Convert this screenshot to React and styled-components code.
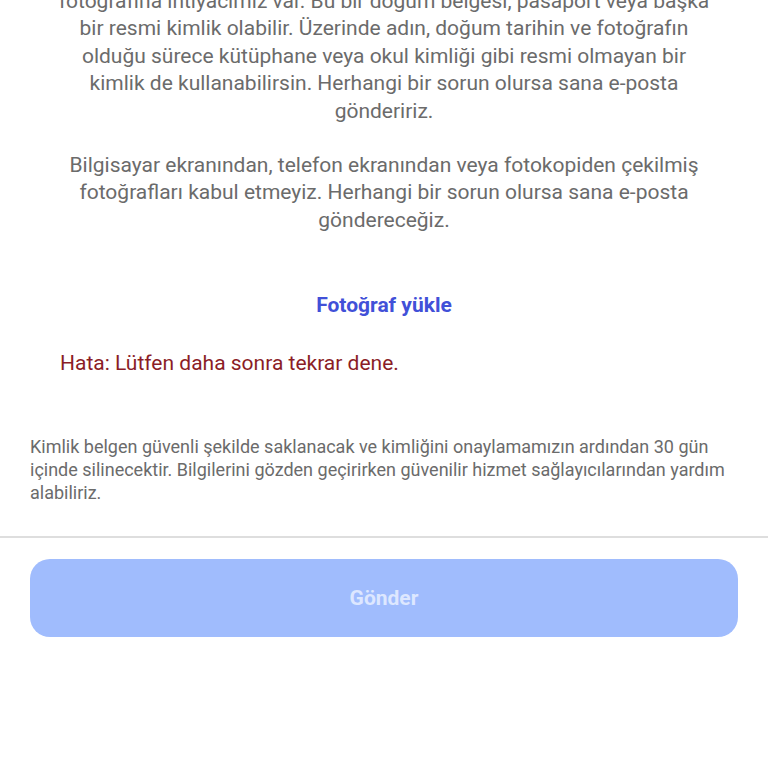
import React from 'react';
import styled, { createGlobalStyle } from 'styled-components';

const GlobalStyle = createGlobalStyle`
  html, body {
    margin: 0;
    padding: 0;
    background: #ffffff;
    font-family: Roboto, "Noto Sans", Arial, sans-serif;
    overflow: hidden;
  }
`;

const Page = styled.div`
  width: 768px;
  min-height: 768px;
  background: #ffffff;
  display: flex;
  flex-direction: column;
`;

const Content = styled.div`
  padding: 0 30px;
  margin-top: -12px;
  display: flex;
  flex-direction: column;
`;

const Intro = styled.div`
  padding: 0 28px;
  display: flex;
  flex-direction: column;
  gap: 27px;
`;

const Paragraph = styled.p`
  margin: 0;
  font-size: 21px;
  line-height: 27.4px;
  color: #6b6b6b;
  text-align: center;
`;

const UploadLink = styled.button`
  align-self: center;
  margin-top: 57px;
  background: none;
  border: none;
  padding: 0;
  font-family: inherit;
  font-size: 21px;
  line-height: 28px;
  font-weight: 700;
  color: #4150d8;
  cursor: pointer;
`;

const ErrorText = styled.div`
  margin-top: 30px;
  padding: 0 30px;
  font-size: 21px;
  line-height: 28px;
  color: #8b1d26;
`;

const Note = styled.p`
  margin: 58px 0 0;
  font-size: 18px;
  line-height: 23px;
  color: #6b6b6b;
`;

const Divider = styled.hr`
  margin: 32px 0 0;
  border: none;
  height: 2px;
  background: #dedede;
`;

const Footer = styled.div`
  padding: 21px 30px;
`;

const SubmitButton = styled.button`
  width: 100%;
  height: 78px;
  border: none;
  border-radius: 20px;
  background: #a0bcfd;
  color: #dde7ff;
  font-family: inherit;
  font-size: 21px;
  font-weight: 700;
  cursor: not-allowed;
`;

const App = () => {
  return (
    <>
      <GlobalStyle />
      <Page>
        <Content>
          <Intro>
            <Paragraph>
              fotoğrafına ihtiyacımız var. Bu bir doğum belgesi, pasaport veya başka bir resmi
              kimlik olabilir. Üzerinde adın, doğum tarihin ve fotoğrafın olduğu sürece kütüphane
              veya okul kimliği gibi resmi olmayan bir kimlik de kullanabilirsin. Herhangi bir
              sorun olursa sana e-posta göndeririz.
            </Paragraph>
            <Paragraph>
              Bilgisayar ekranından, telefon ekranından veya fotokopiden çekilmiş fotoğrafları
              kabul etmeyiz. Herhangi bir sorun olursa sana e-posta göndereceğiz.
            </Paragraph>
          </Intro>
          <UploadLink type="button">Fotoğraf yükle</UploadLink>
          <ErrorText>Hata: Lütfen daha sonra tekrar dene.</ErrorText>
          <Note>
            Kimlik belgen güvenli şekilde saklanacak ve kimliğini onaylamamızın ardından 30 gün
            içinde silinecektir. Bilgilerini gözden geçirirken güvenilir hizmet sağlayıcılarından
            yardım alabiliriz.
          </Note>
        </Content>
        <Divider />
        <Footer>
          <SubmitButton type="button" disabled>Gönder</SubmitButton>
        </Footer>
      </Page>
    </>
  );
};

export default App;
